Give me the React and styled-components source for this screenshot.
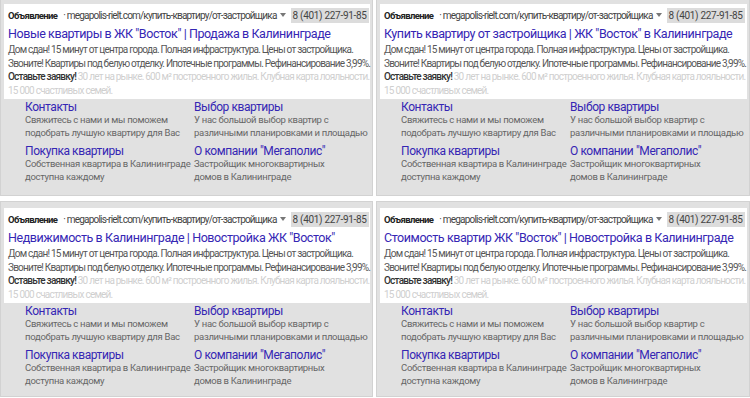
import React from "react";
import styled, { createGlobalStyle } from "styled-components";

const Global = createGlobalStyle`
  html, body { margin: 0; padding: 0; background: #fff; overflow: hidden; }
  body { font-family: Roboto, "Noto Sans", Arial, sans-serif; }
`;

const Grid = styled.div`
  display: grid;
  grid-template-columns: 373px 374px;
  grid-template-rows: 199px 196px;
  column-gap: 3px;
  row-gap: 5px;
  width: 750px;
  margin-top: -3px;
`;

const Card = styled.div`
  background: #e1e1e1;
  border: 1px solid #d2d2d2;
  padding: 6px 2px 0 3px;
  box-sizing: border-box;
  overflow: hidden;
`;

const Ad = styled.div`
  background: #fff;
  padding: 2px 4px 2px;
  white-space: nowrap;
`;

const Head = styled.div`
  display: flex;
  align-items: center;
  height: 18px;
  font-size: 10px;
  letter-spacing: -0.8px;
  color: #444;
`;

const Label = styled.span`
  font-weight: 700;
  color: #222;
  font-size: 9.5px;
  letter-spacing: -0.6px;
  margin-right: 6px;
`;

const Url = styled.span`
  color: #444;
`;

const Caret = styled.span`
  display: inline-block;
  width: 0;
  height: 0;
  border-left: 3px solid transparent;
  border-right: 3px solid transparent;
  border-top: 4px solid #777;
  margin: 0 5px 0 3px;
`;

const Phone = styled.span`
  background: #dcdcdc;
  padding: 2px 2px;
  color: #444;
  letter-spacing: -0.3px;
`;

const Title = styled.div`
  font-size: 12.5px;
  letter-spacing: -0.42px;
  color: #3526b4;
  line-height: 19px;
`;

const Body = styled.div`
  font-size: 10px;
  letter-spacing: -0.77px;
  line-height: 13.5px;
  color: #575757;
`;

const Strong = styled.span`
  color: #333;
  font-weight: 500;
`;

const Faded = styled.span`
  color: #cfcfcf;
`;

const Links = styled.div`
  display: grid;
  grid-template-columns: 169px 1fr;
  row-gap: 5px;
  padding: 1px 0 0 21px;
  white-space: nowrap;
`;

const LinkTitle = styled.div`
  font-size: 12px;
  letter-spacing: -0.42px;
  line-height: 14px;
  color: #3526b4;
`;

const LinkText = styled.div`
  font-size: 9.5px;
  letter-spacing: -0.3px;
  line-height: 12.5px;
  color: #666;
`;

const titles = [
  'Новые квартиры в ЖК "Восток" | Продажа в Калининграде',
  'Купить квартиру от застройщика | ЖК "Восток" в Калининграде',
  'Недвижимость в Калининграде | Новостройка ЖК "Восток"',
  'Стоимость квартир ЖК "Восток" | Новостройка в Калининграде',
];

const sitelinks = [
  { title: "Контакты", lines: ["Свяжитесь с нами и мы поможем", "подобрать лучшую квартиру для Вас"] },
  { title: "Выбор квартиры", lines: ["У нас большой выбор квартир с", "различными планировками и площадью"] },
  { title: "Покупка квартиры", lines: ["Собственная квартира в Калининграде", "доступна каждому"] },
  { title: 'О компании "Мегаполис"', lines: ["Застройщик многоквартирных", "домов в Калининграде"] },
];

function AdCard({ title }) {
  return (
    <Card>
      <Ad>
        <Head>
          <Label>Объявление</Label>
          <Url>· megapolis-rielt.com/купить-квартиру/от-застройщика</Url>
          <Caret />
          <Phone>8 (401) 227-91-85</Phone>
        </Head>
        <Title>{title}</Title>
        <Body>
          Дом сдан! 15 минут от центра города. Полная инфраструктура. Цены от застройщика.
          <br />
          Звоните! Квартиры под белую отделку. Ипотечные программы. Рефинансирование 3,99%.
          <br />
          <Strong>Оставьте заявку!</Strong>{" "}
          <Faded>
            30 лет на рынке. 600 м² построенного жилья. Клубная карта лояльности.
            <br />
            15 000 счастливых семей.
          </Faded>
        </Body>
      </Ad>
      <Links>
        {sitelinks.map((s) => (
          <div key={s.title}>
            <LinkTitle>{s.title}</LinkTitle>
            {s.lines.map((l) => (
              <LinkText key={l}>{l}</LinkText>
            ))}
          </div>
        ))}
      </Links>
    </Card>
  );
}

export default function App() {
  return (
    <>
      <Global />
      <Grid>
        {titles.map((t) => (
          <AdCard key={t} title={t} />
        ))}
      </Grid>
    </>
  );
}
